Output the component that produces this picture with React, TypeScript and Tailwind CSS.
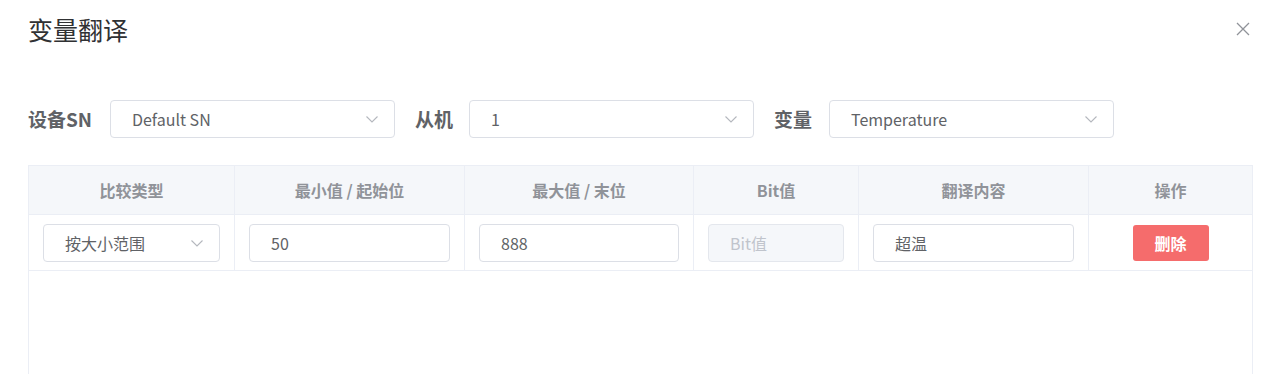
import React from "react";

const font = { fontFamily: '"Noto Sans CJK SC", "Noto Sans", sans-serif' };

function Chevron() {
  return (
    <svg width="16" height="16" viewBox="0 0 16 16" fill="none" className="shrink-0">
      <path d="M2.5 5.5 L8 11 L13.5 5.5" stroke="#b4b7bd" strokeWidth="1.1" />
    </svg>
  );
}

function Select({ value, className = "" }: { value: string; className?: string }) {
  return (
    <div className={`flex h-[38px] items-center justify-between rounded-[4px] border border-[#dcdfe6] bg-white pl-[21px] pr-[14px] text-[16px] text-[#606266] ${className}`}>
      <span>{value}</span>
      <Chevron />
    </div>
  );
}

function Input({ value, disabled = false }: { value: string; disabled?: boolean }) {
  return (
    <div
      className={`flex h-[38px] items-center rounded-[4px] border pl-[21px] text-[16px] ${
        disabled ? "border-[#e4e7ed] bg-[#f5f7fa] text-[#c0c4cc]" : "border-[#dcdfe6] bg-white text-[#606266]"
      }`}
    >
      {value}
    </div>
  );
}

export default function App() {
  const cols = ["w-[205px]", "w-[230px]", "w-[229px]", "w-[165px]", "w-[230px]", "flex-1"];
  const headers = ["比较类型", "最小值 / 起始位", "最大值 / 末位", "Bit值", "翻译内容", "操作"];
  return (
    <div style={font} className="h-[374px] w-[1277px] overflow-hidden bg-white">
      <div className="flex items-start justify-between pl-[28px] pr-[26px] pt-[12px]">
        <h1 className="text-[25px] leading-[34px] text-[#303133]">变量翻译</h1>
        <svg width="16" height="16" viewBox="0 0 16 16" className="mt-[9px]">
          <path d="M2 2 L14 14 M14 2 L2 14" stroke="#909399" strokeWidth="1.3" />
        </svg>
      </div>

      <div className="mt-[54px] flex items-center pl-[28px]">
        <span className="w-[82px] text-[19px] font-bold text-[#606266]">设备SN</span>
        <Select value="Default SN" className="w-[285px]" />
        <span className="ml-[20px] w-[54px] text-[19px] font-bold text-[#606266]">从机</span>
        <Select value="1" className="w-[285px]" />
        <span className="ml-[20px] w-[55px] text-[19px] font-bold text-[#606266]">变量</span>
        <Select value="Temperature" className="w-[285px]" />
      </div>

      <div className="ml-[28px] mt-[27px] h-[300px] w-[1225px] border border-[#ebeef5]">
        <div className="flex h-[49px] border-b border-[#ebeef5] bg-[#f5f7fa]">
          {headers.map((h, i) => (
            <div
              key={h}
              className={`${cols[i]} flex items-center justify-center text-[16px] font-bold text-[#909399] ${i > 0 ? "border-l border-[#ebeef5]" : ""}`}
            >
              {h}
            </div>
          ))}
        </div>
        <div className="flex h-[56px] border-b border-[#ebeef5]">
          <div className={`${cols[0]} flex items-center pl-[14px] pr-[14px]`}>
            <Select value="按大小范围" className="w-full" />
          </div>
          <div className={`${cols[1]} flex items-center border-l border-[#ebeef5] px-[14px]`}>
            <div className="w-full"><Input value="50" /></div>
          </div>
          <div className={`${cols[2]} flex items-center border-l border-[#ebeef5] px-[14px]`}>
            <div className="w-full"><Input value="888" /></div>
          </div>
          <div className={`${cols[3]} flex items-center border-l border-[#ebeef5] px-[14px]`}>
            <div className="w-full"><Input value="Bit值" disabled /></div>
          </div>
          <div className={`${cols[4]} flex items-center border-l border-[#ebeef5] px-[14px]`}>
            <div className="w-full"><Input value="超温" /></div>
          </div>
          <div className={`${cols[5]} flex items-center justify-center border-l border-[#ebeef5]`}>
            <button className="h-[36px] w-[76px] rounded-[3px] bg-[#f56c6c] text-[16px] font-bold text-white">删除</button>
          </div>
        </div>
      </div>
    </div>
  );
}
